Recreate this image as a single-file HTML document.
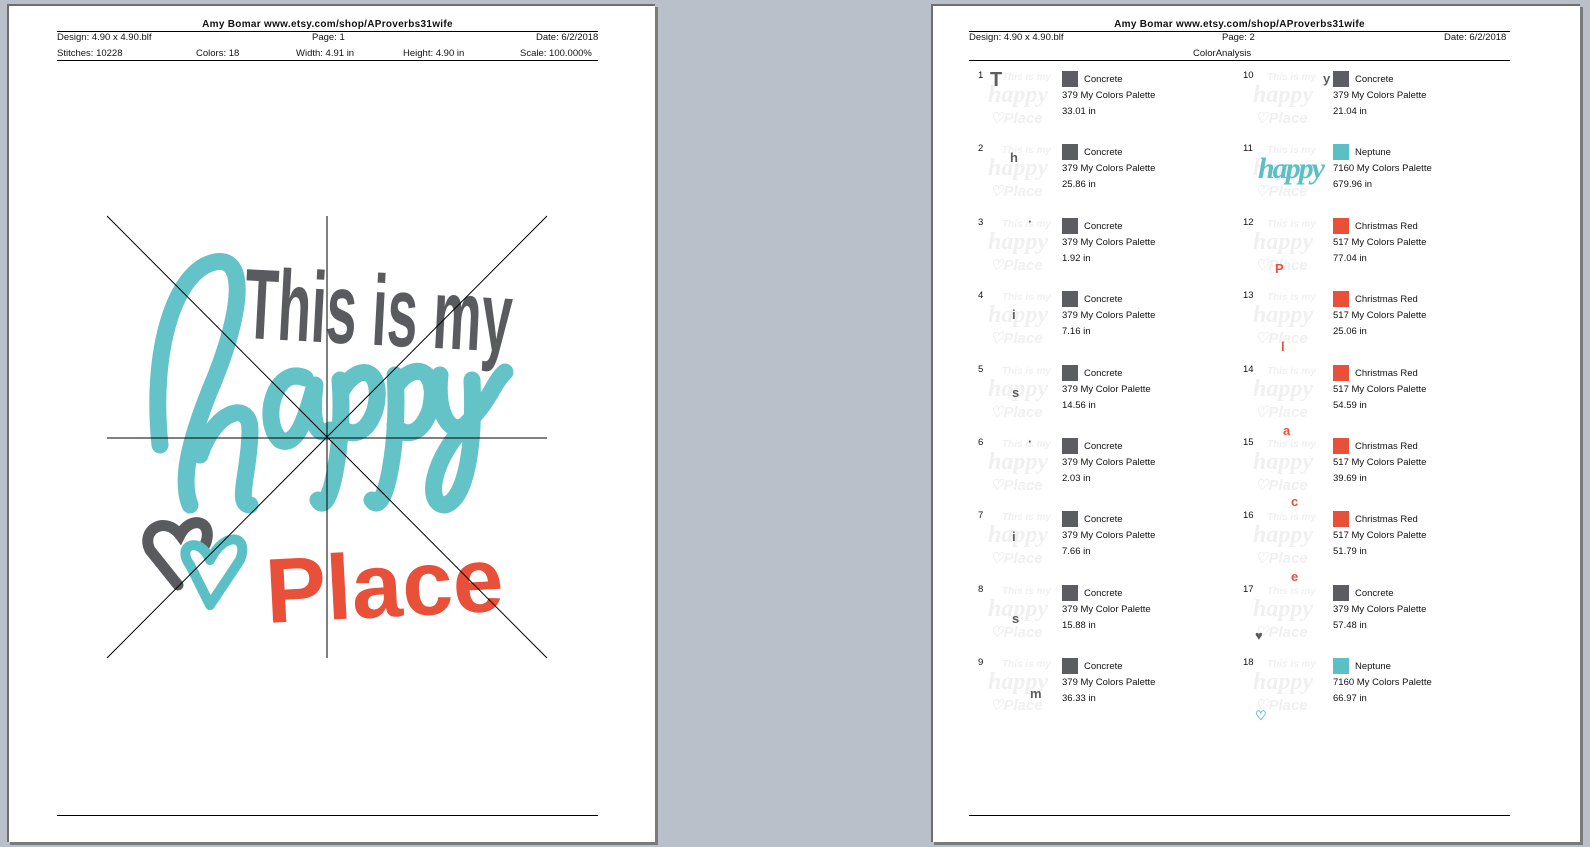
<!DOCTYPE html>
<html><head><meta charset="utf-8"><style>
body{margin:0;width:1590px;height:847px;background:#b9c0ca;position:relative;overflow:hidden;font-family:"Liberation Sans",Arial,sans-serif;color:#111}
.page{position:absolute;background:#fff;border-left:2px solid #6e6e6e;border-top:2px solid #6e6e6e;box-shadow:3px 3px 0 #7a7a7a}
.t{position:absolute;font-size:9.5px;white-space:nowrap}
.hl{position:absolute;height:1px;background:#000}
.sw{position:absolute;width:16px;height:16px}
.gh{position:absolute;color:#f0f0f0;font-weight:bold;font-style:italic;line-height:1;white-space:nowrap}
</style></head><body>
<div class="page" style="left:7px;top:4px;width:646px;height:836px"></div>
<div class="page" style="left:931px;top:4px;width:647px;height:836px"></div>

<div class="t" style="left:0;width:655px;text-align:center;top:19px;font-weight:bold;font-size:10px;letter-spacing:.3px">Amy Bomar www.etsy.com/shop/AProverbs31wife</div>
<div class="hl" style="left:57px;width:541px;top:31px"></div>
<div class="t" style="left:57px;top:32px">Design: 4.90 x 4.90.blf</div>
<div class="t" style="left:312px;top:32px">Page: 1</div>
<div class="t" style="left:536px;top:32px">Date: 6/2/2018</div>
<div class="t" style="left:57px;top:48px">Stitches: 10228</div>
<div class="t" style="left:196px;top:48px">Colors: 18</div>
<div class="t" style="left:296px;top:48px">Width: 4.91 in</div>
<div class="t" style="left:403px;top:48px">Height: 4.90 in</div>
<div class="t" style="left:520px;top:48px">Scale: 100.000%</div>
<div class="hl" style="left:57px;width:541px;top:60px"></div>
<div class="hl" style="left:57px;width:541px;top:815px"></div>

<div class="t" style="left:931px;width:617px;text-align:center;top:19px;font-weight:bold;font-size:10px;letter-spacing:.3px">Amy Bomar www.etsy.com/shop/AProverbs31wife</div>
<div class="hl" style="left:969px;width:541px;top:31px"></div>
<div class="t" style="left:969px;top:32px">Design: 4.90 x 4.90.blf</div>
<div class="t" style="left:1222px;top:32px">Page: 2</div>
<div class="t" style="left:1444px;top:32px">Date: 6/2/2018</div>
<div class="t" style="left:1193px;top:48px">ColorAnalysis</div>
<div class="hl" style="left:969px;width:541px;top:60px"></div>
<div class="hl" style="left:969px;width:541px;top:815px"></div>

<svg width="1590" height="847" style="position:absolute;left:0;top:0">
<g fill="none" stroke="#5bc0c5" stroke-width="17" stroke-linecap="round" stroke-linejoin="round" opacity=".95">
<path d="M160 445 C150 350 175 270 215 262 C250 255 240 320 210 390 C190 440 180 480 190 505 M200 455 C215 410 250 400 250 430 C250 470 235 505 250 505"/>
<path d="M305 378 C275 365 260 420 280 440 C300 450 310 400 315 385 C312 410 312 440 330 430"/>
<path d="M340 380 C345 440 330 520 318 500 M342 390 C360 360 385 370 375 410 C365 440 345 435 340 425"/>
<path d="M395 375 C400 440 385 520 372 500 M397 385 C415 360 440 370 430 410 C420 440 400 435 395 425"/>
<path d="M440 375 C435 420 455 440 470 420 M472 380 C475 450 465 500 445 505 C425 505 430 460 470 420 C490 400 495 380 505 372"/>
</g>
<path d="M178 585 L150 550 C140 530 165 515 180 535 C190 515 215 520 205 545" fill="none" stroke="#5a5b5f" stroke-width="11" stroke-linecap="round"/>
<path d="M210 560 C200 535 175 545 190 565 L210 605 L240 560 C250 535 225 530 210 560" fill="none" stroke="#5bc0c5" stroke-width="10" stroke-linecap="round" stroke-linejoin="round"/>
<text x="245" y="345" font-family="Liberation Sans Narrow,Liberation Sans,sans-serif" font-weight="bold" font-size="100" fill="#5a5b5f" textLength="268" lengthAdjust="spacingAndGlyphs" transform="rotate(3 380 300)">This is my</text>
<text x="265" y="617" font-family="Liberation Sans,sans-serif" font-weight="bold" font-size="92" fill="#e8503a" textLength="238" lengthAdjust="spacingAndGlyphs" transform="rotate(-3 380 580)">Place</text>
<g stroke="#000" stroke-width="1">
<line x1="107" y1="216" x2="547" y2="658"/><line x1="547" y1="216" x2="107" y2="658"/>
<line x1="107" y1="438" x2="547" y2="438"/><line x1="327" y1="216" x2="327" y2="658"/>
</g>
</svg>

<div id="rows"></div>
<script>
var L=[["Concrete","379 My Colors Palette","33.01 in","T"],["Concrete","379 My Colors Palette","25.86 in","h"],["Concrete","379 My Colors Palette","1.92 in","·"],["Concrete","379 My Colors Palette","7.16 in","i"],["Concrete","379 My Color Palette","14.56 in","s"],["Concrete","379 My Colors Palette","2.03 in","·"],["Concrete","379 My Colors Palette","7.66 in","i"],["Concrete","379 My Color Palette","15.88 in","s"],["Concrete","379 My Colors Palette","36.33 in","m"],
["Concrete","379 My Colors Palette","21.04 in","y"],["Neptune","7160 My Colors Palette","679.96 in","happy"],["Christmas Red","517 My Colors Palette","77.04 in","P"],["Christmas Red","517 My Colors Palette","25.06 in","l"],["Christmas Red","517 My Colors Palette","54.59 in","a"],["Christmas Red","517 My Colors Palette","39.69 in","c"],["Christmas Red","517 My Colors Palette","51.79 in","e"],["Concrete","379 My Colors Palette","57.48 in","♥"],["Neptune","7160 My Colors Palette","66.97 in","♡"]];
var col={"Concrete":"#5c5d61","Neptune":"#5bc0c5","Christmas Red":"#e8503a"};
var lx=[[0,0],[20,8],[38,-2],[22,18],[22,22],[38,-2],[22,20],[22,28],[40,30],[68,2],[0,0],[20,45],[26,50],[28,60],[36,58],[36,60],[0,45],[0,52]];
var h="";
for(var i=0;i<18;i++){var c=i<9?0:1,r=i%9,y=71+r*73.4,bx=c?1243:978,sx=c?1333:1062,d=L[i];
h+='<div class="t" style="left:'+bx+'px;top:'+(y-1)+'px">'+(i+1)+'</div>';
h+='<div class="gh" style="left:'+(bx+24)+'px;top:'+(y+2)+'px;font-size:10px">This is my</div><div class="gh" style="left:'+(bx+10)+'px;top:'+(y+12)+'px;font-size:24px;font-family:Liberation Serif,serif">happy</div><div class="gh" style="left:'+(bx+12)+'px;top:'+(y+40)+'px;font-size:15px">♡Place</div>';
var lc=col[d[0]];
if(d[3]=="happy")h+='<div style="position:absolute;left:'+(bx+15)+'px;top:'+(y+8)+'px;font:italic bold 30px Liberation Serif,serif;color:#5bc0c5;letter-spacing:-2px">happy</div>';
else h+='<div style="position:absolute;left:'+(bx+lx[i][0]+12)+'px;top:'+(y+lx[i][1]-2)+'px;font:bold '+(i==0?20:13)+'px Liberation Sans,sans-serif;color:'+lc+'">'+d[3]+'</div>';
h+='<div class="sw" style="left:'+sx+'px;top:'+y+'px;background:'+lc+'"></div>';
h+='<div class="t" style="left:'+(sx+22)+'px;top:'+(y+3)+'px">'+d[0]+'</div>';
h+='<div class="t" style="left:'+sx+'px;top:'+(y+19)+'px">'+d[1]+'</div>';
h+='<div class="t" style="left:'+sx+'px;top:'+(y+35)+'px">'+d[2]+'</div>';}
document.getElementById("rows").innerHTML=h;
</script>
</body></html>
